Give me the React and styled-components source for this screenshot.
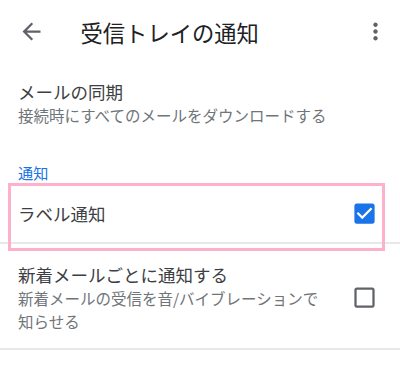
import React from "react";
import styled, { createGlobalStyle } from "styled-components";

const Global = createGlobalStyle`
  html, body { margin: 0; padding: 0; background: #ffffff; }
  body { font-family: "Noto Sans CJK JP", "Noto Sans", sans-serif; -webkit-font-smoothing: antialiased; }
`;

const Page = styled.div`
  width: 400px;
  height: 371px;
  background: #fff;
  overflow: hidden;
`;

const Toolbar = styled.header`
  height: 63px;
  display: flex;
  align-items: center;
  padding: 0 11.5px 0 17.5px;
`;

const Title = styled.h1`
  flex: 1;
  margin: 0 0 0 36px;
  font-size: 22.3px;
  font-weight: 400;
  color: #202124;
  line-height: 30px;
`;

const Icon = styled.svg`
  width: 27px;
  height: 27px;
  flex: none;
  display: block;
  fill: ${(p) => p.$color || "#5f6368"};
`;

const Item = styled.div`
  display: flex;
  align-items: center;
  padding: ${(p) => p.$pad || "0"};
  padding-left: 18px;
  padding-right: 22.4px;
  border-bottom: ${(p) => (p.$divider ? "2px solid #e8e8e8" : "none")};
  position: relative;
  box-sizing: border-box;
  min-height: ${(p) => p.$minH || "auto"};
`;

const Texts = styled.div`
  flex: 1;
  margin-right: 26px;
`;

const ItemTitle = styled.div`
  font-size: 17.5px;
  line-height: 24px;
  color: #3c4043;
`;

const ItemSub = styled.div`
  font-size: 15.5px;
  line-height: 22.5px;
  color: #70757a;
`;

const Category = styled.div`
  padding: 35.5px 18px 0 18px;
  font-size: 15.2px;
  line-height: 20px;
  color: #1a73e8;
  margin-bottom: 3.5px;
`;

const Highlight = styled.div`
  position: absolute;
  left: 8px;
  top: -2px;
  width: 377px;
  height: 68px;
  border: 3px solid #ffb0cb;
  box-sizing: border-box;
  pointer-events: none;
`;

const BackIcon = () => (
  <Icon viewBox="0 0 24 24">
    <path d="M20 11H7.83l5.59-5.59L12 4l-8 8 8 8 1.41-1.41L7.83 13H20v-2z" />
  </Icon>
);

const MoreIcon = () => (
  <Icon viewBox="0 0 24 24">
    <path d="M12 8c1.1 0 2-.9 2-2s-.9-2-2-2-2 .9-2 2 .9 2 2 2zm0 2c-1.1 0-2 .9-2 2s.9 2 2 2 2-.9 2-2-.9-2-2-2zm0 6c-1.1 0-2 .9-2 2s.9 2 2 2 2-.9 2-2-.9-2-2-2z" />
  </Icon>
);

const Checkbox = ({ checked }) =>
  checked ? (
    <Icon viewBox="0 0 24 24" $color="#1a73e8">
      <path d="M19 3H5c-1.11 0-2 .9-2 2v14c0 1.1.89 2 2 2h14c1.11 0 2-.9 2-2V5c0-1.1-.89-2-2-2zm-9 14l-5-5 1.41-1.41L10 14.17l7.59-7.59L19 8l-9 9z" />
    </Icon>
  ) : (
    <Icon viewBox="0 0 24 24" $color="#5f6368">
      <path d="M19 5v14H5V5h14m0-2H5c-1.1 0-2 .9-2 2v14c0 1.1.9 2 2 2h14c1.1 0 2-.9 2-2V5c0-1.1-.9-2-2-2z" />
    </Icon>
  );

export default function App() {
  return (
    <Page>
      <Global />
      <Toolbar>
        <BackIcon />
        <Title>受信トレイの通知</Title>
        <MoreIcon />
      </Toolbar>

      <Item $pad="16.5px 0 0 0">
        <Texts>
          <ItemTitle>メールの同期</ItemTitle>
          <ItemSub>接続時にすべてのメールをダウンロードする</ItemSub>
        </Texts>
      </Item>

      <Category>通知</Category>

      <Item $divider $minH="59px">
        <Texts>
          <ItemTitle>ラベル通知</ItemTitle>
        </Texts>
        <Checkbox checked />
        <Highlight />
      </Item>

      <Item $divider $pad="19px 0 16px 0">
        <Texts>
          <ItemTitle>新着メールごとに通知する</ItemTitle>
          <ItemSub>新着メールの受信を音/バイブレーションで知らせる</ItemSub>
        </Texts>
        <Checkbox />
      </Item>
    </Page>
  );
}
